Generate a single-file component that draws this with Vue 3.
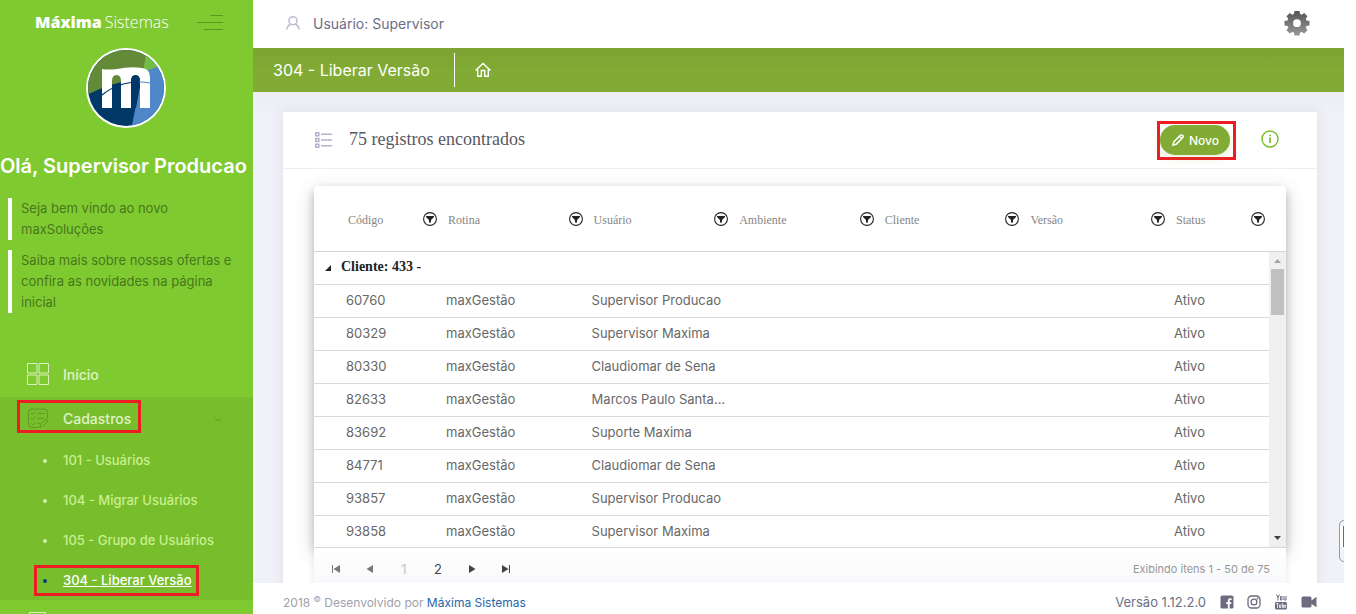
<script setup>
const columns = ['Código', 'Rotina', 'Usuário', 'Ambiente', 'Cliente', 'Versão', 'Status']
const rows = [
  ['60760', 'Supervisor Producao'],
  ['80329', 'Supervisor Maxima'],
  ['80330', 'Claudiomar de Sena'],
  ['82633', 'Marcos Paulo Santa...'],
  ['83692', 'Suporte Maxima'],
  ['84771', 'Claudiomar de Sena'],
  ['93857', 'Supervisor Producao'],
  ['93858', 'Supervisor Maxima']
]
const submenu = [
  { label: '101 - Usuários' },
  { label: '104 - Migrar Usuários' },
  { label: '105 - Grupo de Usuários' },
  { label: '304 - Liberar Versão', active: true }
]
</script>

<template>
  <div class="page">
    <aside class="sidebar">
      <div class="brand">
        <a href="#" class="brand-name"><b>Máxima</b>Sistemas</a>
        <button class="burger" type="button" aria-label="Menu">
          <span class="b1"></span><span class="b2"></span><span class="b3"></span>
        </button>
      </div>
      <svg class="avatar" viewBox="0 0 80 80" aria-hidden="true">
        <defs><clipPath id="disc"><circle cx="40" cy="40" r="38" /></clipPath></defs>
        <circle cx="40" cy="40" r="40" fill="#fff" />
        <g clip-path="url(#disc)">
          <rect width="80" height="80" fill="#003868" />
          <path d="M0 47 L16 40 Q34 33 58 30 L61 0 H0Z" fill="#638a37" />
          <path d="M61 0 L57 24 Q68 22 80 16 V0Z" fill="#73bd45" />
          <path d="M45 82 L57 23 Q68 21 80 15 V82Z" fill="#4f88c8" />
          <path d="M16 21 Q22 22 31 21 Q45 18 56 20 Q64 21 64 29 V60 H54 V33 Q54 27 49.500 27 Q45 27 45 33 V60 H35 V33 Q35 27 30.500 27 Q26 27 26 33 V60 H16Z" fill="#fff" />
          <path d="M45 60 V33 Q45 27 49.500 27 Q54 27 54 33 V38 L50 60Z" fill="#003868" />
          <path d="M16 47 Q32 34 54 34" fill="none" stroke="#003868" stroke-width="1.200" />
          <path d="M53 34 Q60 34 64 35" fill="none" stroke="#4f88c8" stroke-width="1.200" />
        </g>
      </svg>
      <h2 class="hello">Olá, Supervisor Producao</h2>
      <p class="note">Seja bem vindo ao novo maxSoluções</p>
      <p class="note">Saiba mais sobre nossas ofertas e confira as novidades na página inicial</p>
      <nav class="menu">
        <a href="#" class="item">
          <svg class="item-icon" viewBox="0 0 22 22" fill="none" stroke="#d8f0bd" aria-hidden="true">
            <path d="M.5 .5h9.500v9.500H.5zM12 .5h9.500v9.500H12zM.5 12h9.500v9.500H.5zM12 12h9.500v9.500H12z" />
          </svg>
          Início
        </a>
        <div class="group">
          <a href="#" class="item open">
            <svg class="item-icon" viewBox="0 0 22 22" fill="none" stroke="#5b9c23" aria-hidden="true">
              <path d="M11 20.500H5q-3.500 0-3.500-3.500V5.500Q1.500 2 5 2h12q3.500 0 3.500 3.500v6M4 6l1.500 1.500L8.500 5M4 11l1.500 1.500L8.500 10M4 16.500L5.500 18l3-2.500M10.500 6.500H18M10.500 11.500h6M10.500 16.500h2.500M12.500 20.500l1-3.500 5.500-5 2 2-5.500 5.500z" />
            </svg>
            Cadastros
            <svg class="caret" viewBox="0 0 8 5" fill="none" stroke="#5f9f26" aria-hidden="true"><path d="M.5 .5L4 4 7.500 .5" /></svg>
          </a>
          <ul>
            <li v-for="s in submenu" :key="s.label" :class="{ active: s.active }">
              <a href="#">{{ s.label }}</a>
            </li>
          </ul>
        </div>
        <div class="next"><span></span></div>
      </nav>
    </aside>

    <div class="main">
      <header class="topbar">
        <svg class="user-icon" viewBox="0 0 14 14" fill="none" stroke="#bcbcd4" stroke-width="1.500" aria-hidden="true">
          <circle cx="7" cy="4.700" r="4" /><path d="M.7 13.500Q1.500 9.300 4.700 8.200M13.300 13.500Q12.500 9.300 9.300 8.200" />
        </svg>
        <span>Usuário: Supervisor</span>
        <button class="gear" type="button" aria-label="Configurações">
          <svg viewBox="0 0 26 26" aria-hidden="true">
            <defs><linearGradient id="steel" x1="0" y1="0" x2="0" y2="1"><stop offset="0" stop-color="#555" /><stop offset="1" stop-color="#999" /></linearGradient></defs>
            <path fill="url(#steel)" fill-rule="evenodd" d="M10.500 1h5l.6 3 1.600.7 2.500-1.700 3.300 3.300-1.700 2.500.7 1.700 3 .5v4.500l-3 .6-.7 1.700 1.700 2.500-3.300 3.300-2.500-1.700-1.600.7-.6 3h-5l-.6-3-1.600-.7-2.500 1.700-3.300-3.300 1.700-2.500-.7-1.700-3-.6V11l3-.5.7-1.700-1.700-2.500 3.300-3.300 2.500 1.700 1.600-.7zM13 9.300a3.900 3.900 0 1 0 0 7.800 3.900 3.900 0 0 0 0-7.800z" />
          </svg>
        </button>
      </header>

      <div class="titlebar">
        <h1>304 - Liberar Versão</h1>
        <a href="#" class="home" aria-label="Início">
          <svg viewBox="0 0 16 16" fill="none" stroke="#fff" stroke-width="1.400" aria-hidden="true">
            <path d="M.5 8.500L8 1.500l7.500 7M2.700 7v7.300h3.600V8.500h3.400v5.800h3.600V7" />
          </svg>
        </a>
      </div>

      <main class="content">
        <section class="card">
          <div class="card-head">
            <svg class="list-icon" viewBox="0 0 17 16" fill="none" stroke="#b5b2cc" stroke-width="1.600" aria-hidden="true">
              <path d="M.8 .8h3v3h-3zM.8 6.500h3v3h-3zM.8 12.200h3v3h-3zM6 2.300h11M6 8h11M6 13.700h11" />
            </svg>
            <h3>75 registros encontrados</h3>
            <div class="new-wrap">
              <button class="new" type="button">
                <svg viewBox="0 0 12 12" fill="none" stroke="#fff" stroke-width="1.500" aria-hidden="true"><path d="M1 11l.8-3.200L8.500 1.200Q9.500.5 10.600 1.400T10.800 3.500L4.200 10.200zM7.500 2.500l2 2" /></svg>
                Novo
              </button>
            </div>
            <button class="info" type="button" aria-label="Informações">
              <svg viewBox="0 0 18 18" fill="none" stroke="#73bf2c" stroke-width="1.400" aria-hidden="true"><circle cx="9" cy="9" r="8" /><path d="M9 7.500v5.500M9 4.700v1.600" stroke-width="1.700" /></svg>
            </button>
          </div>

          <div class="grid">
            <div class="viewport">
              <table>
                <colgroup><col class="c-indent"><col class="c-code"><col><col><col><col><col><col class="c-status"></colgroup>
                <thead>
                  <tr>
                    <td></td>
                    <th v-for="c in columns" :key="c" scope="col">
                      <div class="th">
                        <span>{{ c }}</span>
                        <button type="button" class="filter" :aria-label="'Filtrar ' + c">
                          <svg viewBox="0 0 14 14" aria-hidden="true"><circle cx="7" cy="7" r="6.400" fill="none" stroke="#222" stroke-width="1.100" /><path d="M3 4h8v1L8 8v2.500H6V8L3 5z" fill="#222" /></svg>
                        </button>
                      </div>
                    </th>
                  </tr>
                </thead>
                <tbody>
                  <tr class="grp">
                    <td colspan="8">
                      <svg viewBox="0 0 6 6" aria-hidden="true"><path d="M6 0v6H0z" fill="#222" /></svg>Cliente: 433 -
                    </td>
                  </tr>
                  <tr v-for="r in rows" :key="r[0]">
                    <td></td><td>{{ r[0] }}</td><td>maxGestão</td><td>{{ r[1] }}</td><td></td><td></td><td></td><td>Ativo</td>
                  </tr>
                </tbody>
              </table>
              <div class="rail" aria-hidden="true">
                <div class="rail-top"></div>
                <div class="track">
                  <svg viewBox="0 0 7 4"><path d="M0 4L3.500 0 7 4z" fill="#a3a3a3" /></svg>
                  <div class="thumb"></div>
                  <svg class="down" viewBox="0 0 7 4"><path d="M0 0L3.500 4 7 0z" fill="#404040" /></svg>
                </div>
              </div>
            </div>
            <div class="pager">
              <button type="button" class="pg off" aria-label="Primeira página"><svg viewBox="0 0 8 8"><path d="M0 0h1v8H0zM8 0v8L1.500 4z" /></svg></button>
              <button type="button" class="pg off" aria-label="Página anterior"><svg viewBox="0 0 8 8"><path d="M7 0v8L.5 4z" /></svg></button>
              <span class="pg cur">1</span>
              <a href="#" class="pg">2</a>
              <button type="button" class="pg" aria-label="Próxima página"><svg viewBox="0 0 8 8"><path d="M1 0v8L7.500 4z" /></svg></button>
              <button type="button" class="pg" aria-label="Última página"><svg viewBox="0 0 8 8"><path d="M7 0h1v8H7zM0 0v8L6.500 4z" /></svg></button>
              <span class="count">Exibindo itens 1 - 50 de 75</span>
            </div>
          </div>
        </section>
        <div class="dock" aria-hidden="true"></div>
      </main>

      <footer class="footer">
        <span class="copy">2018 <sup>©</sup> Desenvolvido por <a href="#">Máxima Sistemas</a></span>
        <span class="version">Versão 1.12.2.0</span>
        <a href="#" class="soc" aria-label="Facebook"><svg viewBox="0 0 14 14"><path fill="#6c6b80" fill-rule="evenodd" d="M2 .5h10Q13.500.5 13.500 2v10q0 1.500-1.500 1.500H9.700V9h1.500l.3-1.800H9.700V5.800q0-.9 1-.9h.9V3.200h-1.400Q7.800 3.200 7.800 5.600v1.600H6.200V9h1.600v4.500H2Q.5 13.500.5 12V2Q.5.5 2 .5z" /></svg></a>
        <a href="#" class="soc" aria-label="Instagram"><svg viewBox="0 0 14 14" fill="none" stroke="#6c6b80" stroke-width="1.300"><rect x="1" y="1" width="12" height="12" rx="3.500" /><circle cx="7" cy="7" r="2.900" /><circle cx="10.500" cy="3.500" r=".3" /></svg></a>
        <a href="#" class="soc tube" aria-label="YouTube"><svg viewBox="0 0 14 16" fill="none" stroke="#6c6b80"><path d="M2.500.5l1.500 3 1.500-3M4 3.500V6.500M6.500 2.500h1.500v3.500H6.500zM10 2v4h2V2" /><rect x="1" y="8" width="12" height="7.500" rx="1.500" fill="#6c6b80" stroke="none" /><path d="M2.300 9.500h2.400M3.500 9.500v4.500M5.500 10.500v3h1.200v-3M8.300 9v4.500h1.200v-2.500H8.300M11.800 13.500h-1v-2.500h1v1.200h-1" stroke="#fff" stroke-width=".8" /></svg></a>
        <a href="#" class="soc video" aria-label="Vídeo"><svg viewBox="0 0 16 12"><path fill="#6c6b80" d="M2 .5h7q1.500 0 1.500 1.500v2.500L15.500 .7v10.600L10.500 8v2q0 1.500-1.500 1.500H2Q.5 11.500.5 10V2Q.5.5 2 .5z" /></svg></a>
      </footer>
    </div>
  </div>
</template>

<style>
body { background: #fff; }
</style>

<style scoped>
*, *::before, *::after { box-sizing: border-box; }
.page {
  display: flex;
  height: 100vh;
  padding-right: 12px;
  overflow: hidden;
  font-family: "Inter", "Liberation Sans", sans-serif;
  font-size: 14px;
}
button { border: 0; padding: 0; background: none; font: inherit; color: inherit; }
a { color: inherit; text-decoration: none; }
svg { display: block; }
h1, h2, h3, p, ul { margin: 0; padding: 0; }

.sidebar { flex: none; width: 253px; overflow: hidden; background: #80ca31; color: #e0f3c8; }
.brand { display: flex; align-items: center; justify-content: space-between; height: 44px; padding: 0 30px 0 35px; color: #fff; }
.brand-name { font-family: "Open Sans", "Noto Sans", sans-serif; font-size: 16px; font-weight: 300; }
.brand-name b { font-weight: 800; margin-right: 3px; }
.burger { display: flex; flex-direction: column; align-items: flex-end; gap: 6px; }
.burger span { height: 1px; background: #579a20; }
.b1 { width: 13px; }
.b2 { width: 26px; }
.b3 { width: 19px; }
.avatar { width: 80px; height: 80px; margin: 4px auto 0 86px; }
.hello { margin: 22px 0 16px; font-size: 20px; line-height: 32px; font-weight: 600; color: #fff; white-space: nowrap; }
.note { margin: 0 12px 10px 8px; padding-left: 9px; border-left: 4px solid #fff; line-height: 21px; color: #47781a; font-size: 13px; }
.menu { margin-top: 40px; }
.item { display: flex; align-items: center; gap: 14px; height: 44px; padding: 0 0 2px 27px; font-weight: 500; }
.item-icon { width: 22px; height: 22px; }
.group { background: #77bd2c; }
.item.open { position: relative; height: 43px; padding-bottom: 1px; }
.open::after { content: ""; position: absolute; left: 17px; top: 3px; width: 124px; height: 33px; border: 3px solid #ed1c24; }
.caret { width: 8px; height: 5px; margin: 2px 31px 0 auto; }
.group ul { list-style: none; }
.group li { position: relative; display: flex; align-items: center; height: 40px; padding-left: 63px; font-size: 13px; font-weight: 500; color: #c9f08f; }
.group li::before { content: ""; position: absolute; left: 43px; top: 19px; width: 4px; height: 4px; border-radius: 50%; background: #d5efb4; }
.group li.active { color: #fff; }
.group li.active a { text-decoration: underline; }
.group li.active::before { background: #073f7a; }
.group li.active::after { content: ""; position: absolute; left: 34px; top: 5px; width: 165px; height: 31px; border: 3px solid #ed1c24; }
.next { padding: 12px 0 0 29px; }
.next span { display: block; width: 17px; height: 20px; border: 1px solid #d8f0bd; }

.main { flex: 1; min-width: 0; display: flex; flex-direction: column; }
.topbar { flex: none; display: flex; align-items: center; height: 48px; padding: 0 34px 2px 33px; color: #6c6e86; font-size: 14px; background: #fff; }
.user-icon { width: 14px; height: 14px; margin-right: 13px; }
.gear { margin-left: auto; }
.gear svg { width: 26px; height: 26px; }
.titlebar { flex: none; display: flex; align-items: center; height: 44px; padding-left: 20px; background: linear-gradient(#7da333, #81ab34 50%); color: #fff; }
.titlebar h1 { font-size: 16px; font-weight: 400; padding-right: 24px; border-right: 1px solid #fff; line-height: 34px; }
.home { margin-left: 20px; }
.home svg { width: 16px; height: 16px; }

.content { position: relative; flex: 1; min-height: 0; overflow: hidden; padding: 20px 27px 0 30px; background: linear-gradient(#eceef4, #f1f2f8 30px); }
.card { min-height: 100%; background: #fff; box-shadow: 0 0 13px rgba(82, 63, 105, .1); padding-bottom: 30px; }
.card-head { display: flex; align-items: center; height: 57px; padding: 0 38px 0 32px; border-bottom: 1px solid #ebedf2; }
.list-icon { width: 17px; height: 16px; margin-right: 17px; }
.card-head h3 { padding-bottom: 2px; font-family: "Liberation Serif", serif; font-weight: 400; font-size: 18px; color: #575962; }
.new-wrap { display: flex; margin: 1px 25px 0 auto; border: 3px solid #ed1c24; padding: 1px 3px 2px 0; }
.new { display: flex; align-items: center; gap: 5px; height: 30px; padding: 0 11px 0 12px; border-radius: 15px; background: #81ab34; color: #fff; font-size: 12px; font-weight: 500; box-shadow: 0 3px 10px rgba(129, 171, 52, .2); }
.new svg { width: 12px; height: 12px; }
.info { padding-bottom: 3px; }
.info svg { width: 18px; height: 18px; }

.grid { margin: 17px 31px 0; }
.viewport { display: flex; height: 361px; overflow: hidden; border-radius: 3px 3px 0 0; background: #fff; box-shadow: 0 4px 8px rgba(0, 0, 0, .2), 0 6px 20px rgba(0, 0, 0, .19); }
table { flex: 1; width: 100%; height: max-content; table-layout: fixed; border-collapse: separate; border-spacing: 0; color: #686868; }
.c-indent { width: 23px; }
.c-code { width: 100px; }
.c-status { width: 104px; }
td { height: 33px; padding: 0 0 2px 9px; border-bottom: 1px solid #dadada; white-space: nowrap; font-size: 13px; }
thead td, th { height: 66px; padding: 0 0 0 11px; border-bottom: 1px solid #d4d4d4; font-weight: 400; }
th:last-child { padding-right: 4px; }
.th { display: flex; align-items: center; justify-content: space-between; font-family: "Liberation Serif", serif; font-size: 12px; color: #868686; }
.th span { padding-top: 3px; }
.filter svg { width: 14px; height: 14px; }
.grp td { padding-left: 11px; font: bold 14px "Liberation Serif", serif; color: #222; }
.grp svg { display: inline-block; width: 6px; height: 6px; margin-right: 10px; }
.rail { flex: none; width: 17px; display: flex; flex-direction: column; }
.rail-top { height: 66px; border-bottom: 1px solid #d4d4d4; }
.track { flex: 1; display: flex; flex-direction: column; align-items: center; padding: 7px 0; background: #f0f0f0; }
.track svg { width: 7px; height: 4px; }
.thumb { width: 13px; height: 46px; margin-top: 6px; background: #c1c1c1; }
.down { margin-top: auto; }
.pager { position: relative; display: flex; align-items: center; height: 42px; padding: 0 16px 0 5px; border-top: 1px solid #d8d8d8; background: linear-gradient(#fff, #f7f8fa); box-shadow: 0 4px 8px rgba(0, 0, 0, .1); font-size: 11px; color: #989898; }
.pg { display: flex; align-items: center; justify-content: center; width: 34px; height: 30px; color: #444; font-size: 13px; }
.pg svg { width: 8px; height: 8px; fill: currentColor; }
.off { color: #777; }
.cur { color: #c4c4c4; }
.count { margin-left: auto; }
.dock { position: absolute; right: -10px; top: 428px; width: 15px; height: 42px; border: 1px solid #999; border-radius: 5px; background: linear-gradient(90deg, #fff 3px, #1c7fd0 3px) content-box #fff; padding: 5px 0 14px; }

.footer { flex: none; display: flex; align-items: center; height: 31px; padding: 7px 27px 0 30px; color: #a0a1ab; font-size: 12px; background: #fff; }
.copy a { color: #2667a5; }
sup { font-size: 8px; line-height: 0; }
.version { margin-left: auto; margin-right: 14px; color: #6c6e86; font-size: 13px; }
.soc { margin-right: 13px; }
.soc svg { width: 14px; height: 14px; }
.tube svg { height: 16px; }
.video { margin-right: 0; }
.video svg { width: 16px; height: 12px; }
</style>
